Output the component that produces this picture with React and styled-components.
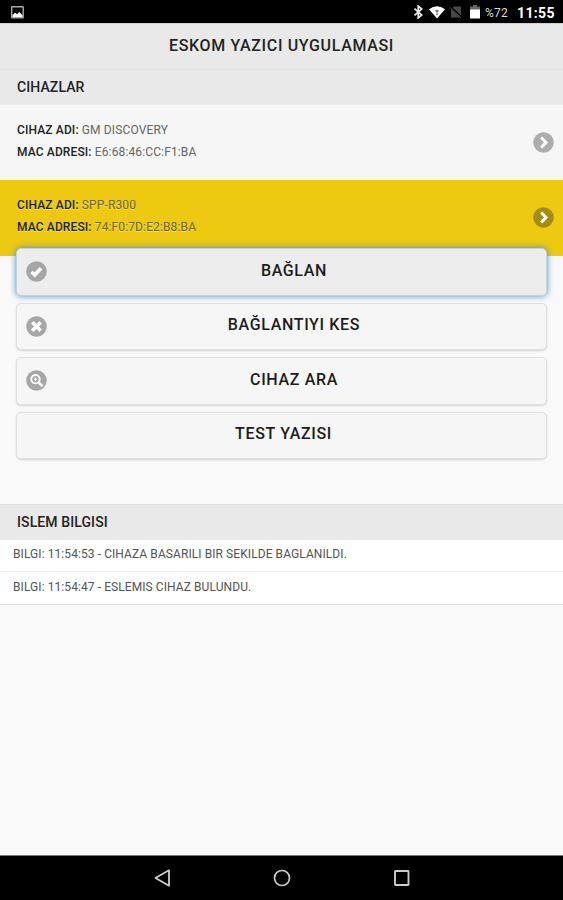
import React from "react";
import styled, { createGlobalStyle } from "styled-components";

const GlobalStyle = createGlobalStyle`
  * {
    box-sizing: border-box;
  }

  body {
    margin: 0;
    background: #f9f9f9;
    font-family: Roboto, "Liberation Sans", sans-serif;
    text-shadow: 0 1px 0 rgba(243, 243, 243, 0.5);
  }
`;

const Screen = styled.div`
  display: flex;
  flex-direction: column;
  height: 900px;
  width: 563px;
  overflow: hidden;
  background: #f9f9f9;
`;

const StatusBar = styled.div`
  display: flex;
  justify-content: space-between;
  height: 23px;
  padding: 0 7px 0 10px;
  background: #000;
  color: #fff;
  text-shadow: none;

  svg {
    display: block;
  }
`;

const StatusIcons = styled.div`
  display: flex;
  align-items: center;
  padding-top: 1px;
`;

const Percent = styled.span`
  margin-left: 4px;
  width: 32px;
  font-size: 12px;
  letter-spacing: 0.2px;
  color: #d8d8d8;
  padding-top: 2px;
`;

const Clock = styled.span`
  width: 39px;
  font-size: 14px;
  font-weight: 700;
  letter-spacing: 0.35px;
  padding-top: 2px;
`;

const Header = styled.h1`
  margin: 0;
  height: 47px;
  line-height: 44px;
  border-top: 1px solid #cfcfcf;
  border-bottom: 1px solid #e2e2e2;
  background: #e9e9e9;
  color: #222;
  font-size: 16px;
  font-weight: 500;
  letter-spacing: 0.65px;
  text-align: center;
`;

const Divider = styled.h2`
  margin: 0;
  padding-left: 17px;
  height: ${(props) => props.$height}px;
  line-height: 34px;
  border-bottom: 1px solid ${(props) => props.$line};
  background: #e9e9e9;
  color: #222;
  font-size: 14px;
  font-weight: 500;
  letter-spacing: 0.1px;
`;

const Device = styled.div`
  display: flex;
  align-items: center;
  justify-content: space-between;
  height: ${(props) => (props.$selected ? 76 : 75)}px;
  padding: 0 9px 1px 17px;
  background: ${(props) => (props.$selected ? "#edc912" : "#f6f6f6")};
`;

const DeviceText = styled.div`
  padding-bottom: 3px;
  color: ${(props) => (props.$selected ? "#706522" : "#666")};
  font-size: 12px;
  font-weight: 400;
  line-height: 22px;
  letter-spacing: 0.13px;

  b {
    color: #222;
    font-weight: 500;
  }
`;

const Buttons = styled.div`
  display: flex;
  flex-direction: column;
  gap: 7px;
  margin-top: -8px;
  padding: 0 16px;
`;

const Button = styled.button`
  display: flex;
  align-items: center;
  height: 47.5px;
  padding: 0 9px;
  border: 1px solid ${(props) => (props.$focus ? "#c5d3dd" : "#e0e0e0")};
  border-radius: 5px;
  background: ${(props) => (props.$focus ? "#ededed" : "#f6f6f6")};
  box-shadow: ${(props) =>
    props.$focus
      ? "0 0 6px rgba(56, 139, 200, 0.95)"
      : "0 1px 2px rgba(0, 0, 0, 0.15)"};
  color: #1c1c1c;
  font-family: inherit;
  font-size: 16px;
  font-weight: 500;
  text-shadow: inherit;
`;

/* the label is centred in the space left beside the icon */
const Label = styled.span`
  flex: 1;
  padding: 0 0 3px 4px;
  letter-spacing: 0.65px;
  text-align: center;
`;

const LogHeader = styled.div`
  margin-top: 45px;
  border-top: 1px solid #e0e0e0;
`;

const LogRow = styled.div`
  height: ${(props) => (props.$last ? 33 : 32)}px;
  padding-left: 13px;
  line-height: ${(props) => (props.$last ? 30 : 28)}px;
  border-bottom: 1px solid ${(props) => (props.$last ? "#dcdcdc" : "#eee")};
  background: #fff;
  color: #555;
  font-size: 12px;
  letter-spacing: 0.08px;
`;

const NavBar = styled.div`
  display: flex;
  justify-content: center;
  align-items: center;
  gap: 98px;
  height: 45px;
  margin-top: auto;
  border-top: 1px solid #777;
  background: #000;
`;

const glyphs = {
  arrow: <path d="M8.2 5.5 13 10.5 8.2 15.5" />,
  check: <path d="M5.5 11 8.8 14 15 7.3" />,
  cross: <path d="M6.3 6.3 14.7 14.7M14.7 6.3 6.3 14.7" />,
};

const RoundIcon = ({ name, color = "#a6a6a6" }) => (
  <svg width="21" height="21" viewBox="0 0 21 21" fill="none">
    <circle cx="10.5" cy="10.5" r="10.3" fill={color} />
    {name === "search" ? (
      <g stroke="#fff">
        <circle cx="9.5" cy="9.2" r="4.2" strokeWidth="1.9" />
        <path d="M12.7 12.5 15.8 15.5" strokeWidth="2.6" strokeLinecap="round" />
        <path d="M9.5 7.6v3.2M7.9 9.2h3.2" strokeWidth="1" />
      </g>
    ) : (
      <g stroke="#fff" strokeWidth={name === "arrow" ? 2.9 : 3.7}>
        {glyphs[name]}
      </g>
    )}
  </svg>
);

const devices = [
  { name: "GM DISCOVERY", mac: "E6:68:46:CC:F1:BA" },
  { name: "SPP-R300", mac: "74:F0:7D:E2:B8:BA", selected: true },
];

const actions = [
  { label: "BAĞLAN", icon: "check", focus: true },
  { label: "BAĞLANTIYI KES", icon: "cross" },
  { label: "CIHAZ ARA", icon: "search" },
  { label: "TEST YAZISI" },
];

const logs = [
  "BILGI: 11:54:53 - CIHAZA BASARILI BIR SEKILDE BAGLANILDI.",
  "BILGI: 11:54:47 - ESLEMIS CIHAZ BULUNDU.",
];

const App = () => {
  return (
    <Screen>
      <GlobalStyle />
      <StatusBar>
        <StatusIcons>
          <svg width="14" height="13" viewBox="0 0 14 13">
            <rect x="1.7" y="0.7" width="11.5" height="11" rx="0.5" fill="none" stroke="#aaa" strokeWidth="1.4" />
            <path d="M2.5 11V9l2.5-2.3L7 8.3 9.3 6l3.2 3.2V11z" fill="#fff" />
          </svg>
        </StatusIcons>
        <StatusIcons>
          <svg width="11" height="14" viewBox="0 0 11 14">
            <path
              d="M1.5 3.7 8.7 10 5.2 13V1L8.7 4 1.5 10.3"
              fill="none"
              stroke="#e8e8e8"
              strokeWidth="1.7"
            />
          </svg>
          <svg width="18" height="14" viewBox="0 0 18 14" style={{ marginLeft: 4 }}>
            <path d="M1 4.2Q9-1.8 17 4.2L9 13.5z" fill="#fff" />
            <path d="M7 5.7q2-1.7 4 0L9 8z" fill="#777" />
            <circle cx="9" cy="9.2" r="1" fill="#777" />
          </svg>
          <svg width="12" height="14" viewBox="0 0 12 14" style={{ marginLeft: 4 }}>
            <path d="M4 1.5h7v11H1V4.2z" fill="#484848" />
            <path d="M0 1.5 12 13" stroke="#000" strokeWidth="2" />
            <path d="M0 2.5 11 13" stroke="#555" strokeWidth="1" />
          </svg>
          <svg width="12" height="14" viewBox="0 0 12 14" style={{ marginLeft: 7 }}>
            <path d="M4 0h4v1.5h3V5H1V1.5h3z" fill="#666" />
            <rect x="1" y="4.5" width="10" height="9" fill="#fff" />
          </svg>
          <Percent>%72</Percent>
          <Clock>11:55</Clock>
        </StatusIcons>
      </StatusBar>

      <Header>ESKOM YAZICI UYGULAMASI</Header>
      <Divider $height={35} $line="#efefef">
        CIHAZLAR
      </Divider>
      {devices.map((device) => (
        <Device key={device.mac} $selected={device.selected}>
          <DeviceText $selected={device.selected}>
            <div>
              <b>CIHAZ ADI:</b> {device.name}
            </div>
            <div>
              <b>MAC ADRESI:</b> {device.mac}
            </div>
          </DeviceText>
          <RoundIcon name="arrow" color={device.selected ? "#a58c14" : "#adadad"} />
        </Device>
      ))}

      <Buttons>
        {actions.map((action) => (
          <Button key={action.label} type="button" $focus={action.focus}>
            {action.icon && <RoundIcon name={action.icon} />}
            <Label>{action.label}</Label>
          </Button>
        ))}
      </Buttons>

      <LogHeader>
        <Divider $height={35} $line="#e9e9e9">
          ISLEM BILGISI
        </Divider>
      </LogHeader>
      {logs.map((log, i) => (
        <LogRow key={log} $last={i === logs.length - 1}>
          {log}
        </LogRow>
      ))}

      <NavBar>
        <svg width="22" height="20" viewBox="0 0 22 20">
          <path d="M4.5 10 18 2.2V17.8z" fill="none" stroke="#ccc" strokeWidth="1.8" strokeLinejoin="round" />
        </svg>
        <svg width="22" height="20" viewBox="0 0 22 20">
          <circle cx="11" cy="10" r="7.5" fill="none" stroke="#ccc" strokeWidth="1.7" />
        </svg>
        <svg width="22" height="20" viewBox="0 0 22 20">
          <rect x="4" y="3" width="13.5" height="14" rx="0.5" fill="none" stroke="#ccc" strokeWidth="1.9" />
        </svg>
      </NavBar>
    </Screen>
  );
};

export default App;
